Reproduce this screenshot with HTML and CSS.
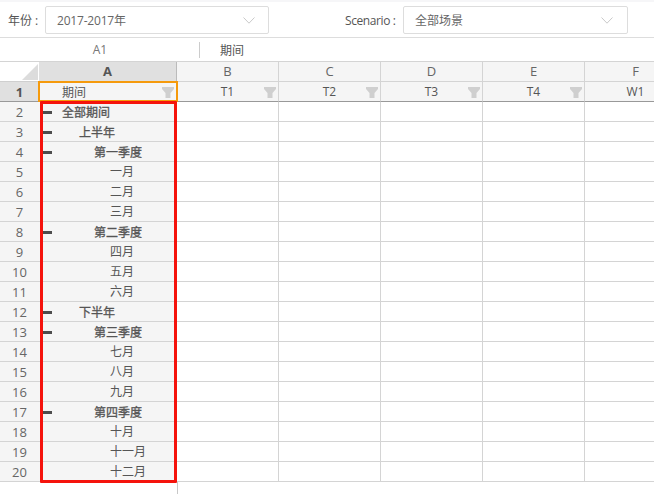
FILE: index.html
```html
<!DOCTYPE html>
<html lang="zh">
<head>
<meta charset="utf-8">
<title>Sheet</title>
<link rel="stylesheet" href="styles.css">
</head>
<body>
<svg class="defs" width="0" height="0"><defs><symbol id="fn" viewBox="0 0 12 11"><path d="M0 0h12v2L8.500 6v5h-5V6L0 2z"/></symbol></defs></svg>
<div class="toolbar">
  <div class="field field-year">
    <span class="label">年份 :</span>
    <div class="select select-year"><span>2017-2017年</span>
      <svg class="chev" viewBox="0 0 12 7"><path d="M.5.500 6 6.200 11.500.500"/></svg></div>
  </div>
  <div class="field field-scenario">
    <span class="label">Scenario :</span>
    <div class="select select-scenario"><span>全部场景</span>
      <svg class="chev" viewBox="0 0 12 7"><path d="M.5.500 6 6.200 11.500.500"/></svg></div>
  </div>
</div>
<div class="formula">
  <div class="cellref">A1</div>
  <div class="sep"></div>
  <div class="fvalue">期间</div>
</div>
<div class="sheet">
  <div class="grid">
    <div class="c corner"><svg viewBox="0 0 16 16"><path d="M16 0v16H0z"/></svg></div>
    <div class="c colh on">A</div><div class="c colh">B</div><div class="c colh">C</div><div class="c colh">D</div><div class="c colh">E</div><div class="c colh">F</div>
    <div class="c rowh on">1</div>
    <div class="c r1 a">期间<svg class="funnel"><use href="#fn"/></svg></div>
    <div class="c r1">T1<svg class="funnel"><use href="#fn"/></svg></div>
    <div class="c r1">T2<svg class="funnel"><use href="#fn"/></svg></div>
    <div class="c r1">T3<svg class="funnel"><use href="#fn"/></svg></div>
    <div class="c r1">T4<svg class="funnel"><use href="#fn"/></svg></div>
    <div class="c r1">W1</div>

    <div class="c rowh">2</div><div class="c a-cell l0 bold"><i class="minus"></i>全部期间</div><div class="c"></div><div class="c"></div><div class="c"></div><div class="c"></div><div class="c"></div>
    <div class="c rowh">3</div><div class="c a-cell l1 bold"><i class="minus"></i>上半年</div><div class="c"></div><div class="c"></div><div class="c"></div><div class="c"></div><div class="c"></div>
    <div class="c rowh">4</div><div class="c a-cell l2 bold"><i class="minus"></i>第一季度</div><div class="c"></div><div class="c"></div><div class="c"></div><div class="c"></div><div class="c"></div>
    <div class="c rowh">5</div><div class="c a-cell l3">一月</div><div class="c"></div><div class="c"></div><div class="c"></div><div class="c"></div><div class="c"></div>
    <div class="c rowh">6</div><div class="c a-cell l3">二月</div><div class="c"></div><div class="c"></div><div class="c"></div><div class="c"></div><div class="c"></div>
    <div class="c rowh">7</div><div class="c a-cell l3">三月</div><div class="c"></div><div class="c"></div><div class="c"></div><div class="c"></div><div class="c"></div>
    <div class="c rowh">8</div><div class="c a-cell l2 bold"><i class="minus"></i>第二季度</div><div class="c"></div><div class="c"></div><div class="c"></div><div class="c"></div><div class="c"></div>
    <div class="c rowh">9</div><div class="c a-cell l3">四月</div><div class="c"></div><div class="c"></div><div class="c"></div><div class="c"></div><div class="c"></div>
    <div class="c rowh">10</div><div class="c a-cell l3">五月</div><div class="c"></div><div class="c"></div><div class="c"></div><div class="c"></div><div class="c"></div>
    <div class="c rowh">11</div><div class="c a-cell l3">六月</div><div class="c"></div><div class="c"></div><div class="c"></div><div class="c"></div><div class="c"></div>
    <div class="c rowh">12</div><div class="c a-cell l1 bold"><i class="minus"></i>下半年</div><div class="c"></div><div class="c"></div><div class="c"></div><div class="c"></div><div class="c"></div>
    <div class="c rowh">13</div><div class="c a-cell l2 bold"><i class="minus"></i>第三季度</div><div class="c"></div><div class="c"></div><div class="c"></div><div class="c"></div><div class="c"></div>
    <div class="c rowh">14</div><div class="c a-cell l3">七月</div><div class="c"></div><div class="c"></div><div class="c"></div><div class="c"></div><div class="c"></div>
    <div class="c rowh">15</div><div class="c a-cell l3">八月</div><div class="c"></div><div class="c"></div><div class="c"></div><div class="c"></div><div class="c"></div>
    <div class="c rowh">16</div><div class="c a-cell l3">九月</div><div class="c"></div><div class="c"></div><div class="c"></div><div class="c"></div><div class="c"></div>
    <div class="c rowh">17</div><div class="c a-cell l2 bold"><i class="minus"></i>第四季度</div><div class="c"></div><div class="c"></div><div class="c"></div><div class="c"></div><div class="c"></div>
    <div class="c rowh">18</div><div class="c a-cell l3">十月</div><div class="c"></div><div class="c"></div><div class="c"></div><div class="c"></div><div class="c"></div>
    <div class="c rowh">19</div><div class="c a-cell l3">十一月</div><div class="c"></div><div class="c"></div><div class="c"></div><div class="c"></div><div class="c"></div>
    <div class="c rowh">20</div><div class="c a-cell l3">十二月</div><div class="c"></div><div class="c"></div><div class="c"></div><div class="c"></div><div class="c"></div>
  </div>
  <div class="tail"></div>
  <div class="sel-orange"></div>
  <div class="sel-red"></div>
</div>
</body>
</html>
```
FILE: styles.css
```css
* { box-sizing: border-box; }
html, body { margin: 0; padding: 0; }
body {
  width: 654px; height: 494px; overflow: hidden; background: #fff;
  font-family: "Open Sans", "Noto Sans CJK SC", sans-serif;
  font-size: 12px; color: #555;
}
.defs { position: absolute; }
.toolbar {
  height: 38px; display: flex; align-items: center;
  border-top: 2px solid #f6f6f8; border-bottom: 1px solid #ddd;
  padding-top: 1px;
}
.field { display: flex; align-items: center; }
.field-year { padding-left: 8px; width: 345px; }
.label { color: #555; white-space: nowrap; }
.field-year .label { width: 37px; }
.field-scenario .label { width: 58px; letter-spacing: -0.4px; }
.select {
  height: 28px; border: 1px solid #ddd; border-radius: 2px;
  display: flex; align-items: center; justify-content: space-between;
  padding: 0 13px 0 11px; color: #666; background: #fff;
}
.select-year { width: 224px; letter-spacing: -0.2px; }
.select-scenario { width: 225px; }
.chev { width: 12px; height: 7px; fill: none; stroke: #c9c9c9; stroke-width: 1; }
.select-scenario .chev { margin-right: 1px; }
.formula { height: 23px; display: flex; align-items: center; }
.cellref { width: 199px; padding-left: 1px; text-align: center; color: #777; }
.sep { width: 1px; height: 16px; background: #ccc; }
.fvalue { padding-left: 20px; color: #555; }
.sheet { position: relative; height: 433px; overflow: hidden; }
.grid {
  display: grid;
  grid-template-columns: 39px 138px 102px 102px 102px 102px 102px;
  grid-auto-rows: 20px;
  border-top: 1px solid #d4d4d4;
  width: 687px;
}
.c {
  border-right: 1px solid #d4d4d4; border-bottom: 1px solid #d4d4d4;
  display: flex; align-items: center; justify-content: center;
  white-space: nowrap; overflow: hidden; position: relative; min-width: 0;
}
.corner { background: #fff; border-right: 0; border-bottom: 1px solid #cfcfcf; }
.corner svg { position: absolute; right: 1px; bottom: 1px; width: 16px; height: 16px; fill: #dcdcdc; }
.colh { background: #f5f5f5; color: #666; font-size: 13px; padding-bottom: 2px; }
.colh.on { background: #e0e0e0; font-weight: 700; color: #555; border-right-color: #bbb; }
.rowh { background: #f5f5f5; color: #666; font-size: 13px; border-right: 0; }
.rowh.on { background: #e0e0e0; font-weight: 700; color: #555; border-bottom: 1px solid #999; }
.r1 { background: #f5f5f5; border-bottom: 1px solid #999; color: #555; }
.r1.a { justify-content: flex-start; padding-left: 23px; }
.funnel { position: absolute; right: 2px; top: 5px; width: 12px; height: 11px; fill: #cfcfcf; }
.a-cell {
  background: #f5f5f5; justify-content: flex-start;
  padding-left: 23px; color: #555; padding-bottom: 1px;
}
.a-cell.bold { padding-bottom: 0; -webkit-text-stroke: 0.3px #555; }
.minus { position: absolute; left: 4px; top: 9px; width: 9px; height: 3px; background: #4d4d4d; }
.l1 { padding-left: 40px; }
.l2 { padding-left: 55px; }
.l3 { padding-left: 71px; }
.tail { position: absolute; left: 177px; top: 421px; width: 1px; height: 12px; background: #c8c8c8; }
.sel-orange {
  position: absolute; left: 38px; top: 20px; width: 140px; height: 21px;
  border: 2px solid #f59a0c;
}
.sel-red {
  position: absolute; left: 40px; top: 40px; width: 137px; height: 382px;
  border: 3px solid #f5130c; border-radius: 1px;
}
```
